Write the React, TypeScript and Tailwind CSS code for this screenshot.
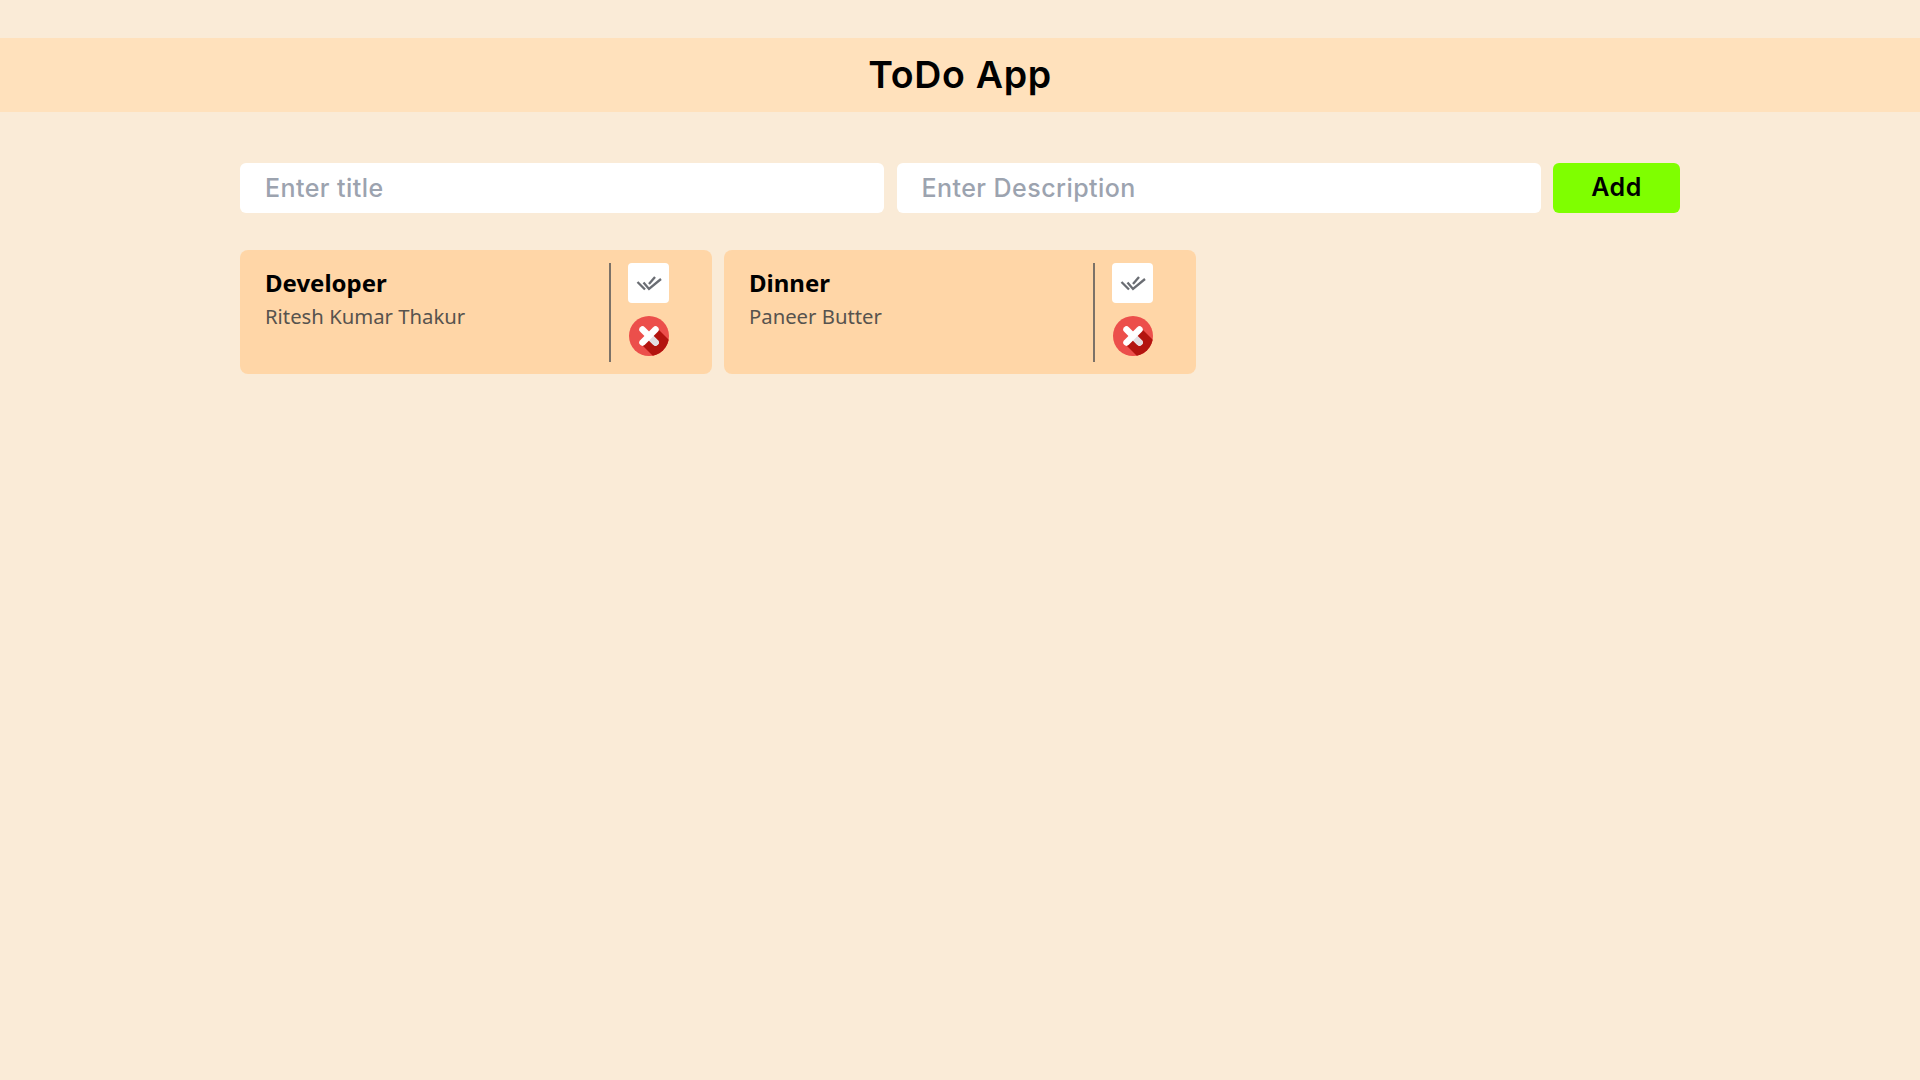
const checkIcon = (
  <svg viewBox="0 0 41 40" className="w-[41px] h-10 block" fill="none" stroke="#6a6d73" strokeWidth="2.3">
    <path d="M9.5 19 L17 26.5" />
    <path d="M15.5 19.5 L21 26 L33 16" />
    <path d="M21 21 L27 14" />
  </svg>
);

const crossIcon = (
  <svg viewBox="0 0 40 40" className="w-10 h-10 block">
    <defs>
      <clipPath id="disc">
        <circle cx="20" cy="20" r="20" />
      </clipPath>
    </defs>
    <circle cx="20" cy="20" r="20" fill="#ec4f4b" />
    <path d="M27 11 L47 31 L31 47 L11 27 Z" fill="#b3140f" clipPath="url(#disc)" />
    <path d="M13.5 13.5 L26.5 26.5" stroke="#ffffff" strokeWidth="6.5" strokeLinecap="round" />
    <path d="M21 21 L26.5 26.5" stroke="#e2dee2" strokeWidth="6.5" strokeLinecap="round" />
    <path d="M26.5 13.5 L13.5 26.5" stroke="#ffffff" strokeWidth="6.5" strokeLinecap="round" />
  </svg>
);

function Card({ title, text }: { title: string; text: string }) {
  return (
    <div className="h-[124px] bg-[#ffd6a7] rounded-lg pl-[25px] pt-[13px] pb-3 flex">
      <div className="w-[344px] pr-3">
        <h2 className="text-[24px] leading-[32px] mt-1 font-bold text-black font-['Noto_Sans','Open_Sans',sans-serif]">{title}</h2>
        <p className="text-[20.3px] leading-[28px] mt-[3px] text-[#57534e] font-['Noto_Sans','Open_Sans',sans-serif]">{text}</p>
      </div>
      <div className="w-[2px] bg-[#7c7268]" />
      <div className="ml-[17px] flex flex-col gap-[13px]">
        <button className="w-[41px] h-10 bg-white rounded flex items-center justify-center">{checkIcon}</button>
        <button className="w-[41px] h-10 flex items-center justify-end">{crossIcon}</button>
      </div>
    </div>
  );
}

export default function App() {
  return (
    <div className="min-h-screen bg-[#faebd7] pt-[38px]">
      <header className="h-[74px] bg-[#ffe1bc] flex items-center justify-center">
        <h1 className="text-[37.5px] font-semibold tracking-[0.7px] text-black font-['Inter',sans-serif]">ToDo App</h1>
      </header>
      <main className="w-[1440px] mx-auto mt-[51px]">
        <div className="flex gap-[12.5px]">
          <input
            placeholder="Enter title"
            className="w-[644px] h-[50px] bg-white rounded-md px-[25px] text-[25px] tracking-[0.45px] font-medium placeholder:text-[#9ca3af] outline-none font-['Inter',sans-serif]"
          />
          <input
            placeholder="Enter Description"
            className="w-[644px] h-[50px] bg-white rounded-md px-[25px] text-[25px] tracking-[0.45px] font-medium placeholder:text-[#9ca3af] outline-none font-['Inter',sans-serif]"
          />
          <button className="flex-1 h-[50px] bg-[#7fff00] rounded-md text-[25px] font-semibold tracking-[0.5px] text-black font-['Inter',sans-serif]">Add</button>
        </div>
        <div className="grid grid-cols-3 gap-3 mt-[37px]">
          <Card title="Developer" text="Ritesh Kumar Thakur" />
          <Card title="Dinner" text="Paneer Butter" />
        </div>
      </main>
    </div>
  );
}
